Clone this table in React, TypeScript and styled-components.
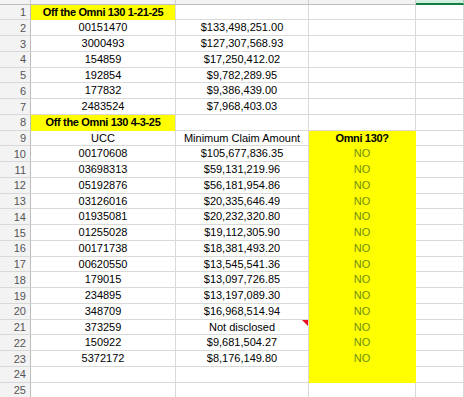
import React from "react";
import styled, { createGlobalStyle } from "styled-components";

const Global = createGlobalStyle`
  html, body { margin: 0; padding: 0; background: #ffffff; overflow: hidden; }
  body { font-family: "Liberation Sans", Arial, sans-serif; }
`;

const YELLOW = "#ffff00";
const GRID = "#d9d9d9";

const Sheet = styled.div`
  display: grid;
  grid-template-columns: 31px 145px 133px 107px 1fr;
  grid-template-rows: 20px repeat(25, 15.75px);
  margin-top: -15.3px;
  width: 464px;
  font-size: 11px;
  color: #000;
`;

const ColHead = styled.div<{ $active?: boolean }>`
  display: flex;
  align-items: center;
  justify-content: center;
  background: ${(p) => (p.$active ? "#d2eedc" : "#f3f3f3")};
  border-right: 1px solid ${(p) => (p.$active ? "#9fd3b3" : "#cfcfcf")};
  border-bottom: ${(p) => (p.$active ? "2px solid #107c41" : "1px solid #bdbdbd")};
  box-sizing: border-box;
  color: ${(p) => (p.$active ? "#0e5c30" : "#555")};
  font-size: 11px;
  line-height: 1;
  padding-top: 3px;
`;

const RowHead = styled.div`
  display: flex;
  align-items: center;
  justify-content: flex-end;
  padding-right: 4px;
  background: #f3f3f3;
  border-right: 1px solid #bdbdbd;
  border-bottom: 1px solid #d8d8d8;
  box-sizing: border-box;
  color: #555;
  font-size: 11px;
`;

const Cell = styled.div<{ $fill?: string; $bold?: boolean; $color?: string; $coverRight?: boolean }>`
  position: relative;
  display: flex;
  align-items: center;
  justify-content: center;
  white-space: nowrap;
  box-sizing: border-box;
  background: ${(p) => p.$fill || "transparent"};
  border-right: 1px solid ${(p) => (p.$fill && p.$coverRight ? p.$fill : GRID)};
  border-bottom: 1px solid ${(p) => p.$fill || GRID};
  font-weight: ${(p) => (p.$bold ? 700 : 400)};
  letter-spacing: ${(p) => (p.$bold ? "-0.35px" : "0")};
  color: ${(p) => p.$color || "#000"};
  padding-bottom: 1px;
`;

const CommentMark = styled.span`
  position: absolute;
  top: 0;
  right: 0;
  width: 0;
  height: 0;
  border-top: 6px solid #e81123;
  border-left: 6px solid transparent;
`;

type Row = { b?: string; c?: string; d?: string; bFill?: boolean; bBold?: boolean; dFill?: boolean; dBold?: boolean; comment?: boolean };

const rows: Row[] = [
  { b: "Off the Omni 130 1-21-25", bFill: true, bBold: true },
  { b: "00151470", c: "$133,498,251.00" },
  { b: "3000493", c: "$127,307,568.93" },
  { b: "154859", c: "$17,250,412.02" },
  { b: "192854", c: "$9,782,289.95" },
  { b: "177832", c: "$9,386,439.00" },
  { b: "2483524", c: "$7,968,403.03" },
  { b: "Off the Omni 130 4-3-25", bFill: true, bBold: true },
  { b: "UCC", c: "Minimum Claim Amount", d: "Omni 130?", dFill: true, dBold: true },
  { b: "00170608", c: "$105,677,836.35", d: "NO", dFill: true },
  { b: "03698313", c: "$59,131,219.96", d: "NO", dFill: true },
  { b: "05192876", c: "$56,181,954.86", d: "NO", dFill: true },
  { b: "03126016", c: "$20,335,646.49", d: "NO", dFill: true },
  { b: "01935081", c: "$20,232,320.80", d: "NO", dFill: true },
  { b: "01255028", c: "$19,112,305.90", d: "NO", dFill: true },
  { b: "00171738", c: "$18,381,493.20", d: "NO", dFill: true },
  { b: "00620550", c: "$13,545,541.36", d: "NO", dFill: true },
  { b: "179015", c: "$13,097,726.85", d: "NO", dFill: true },
  { b: "234895", c: "$13,197,089.30", d: "NO", dFill: true },
  { b: "348709", c: "$16,968,514.94", d: "NO", dFill: true },
  { b: "373259", c: "Not disclosed", d: "NO", dFill: true, comment: true },
  { b: "150922", c: "$9,681,504.27", d: "NO", dFill: true },
  { b: "5372172", c: "$8,176,149.80", d: "NO", dFill: true },
  { dFill: true },
  {},
];

export default function App() {
  return (
    <>
      <Global />
      <Sheet>
        <ColHead />
        <ColHead>A</ColHead>
        <ColHead>B</ColHead>
        <ColHead>C</ColHead>
        <ColHead $active>D</ColHead>
        {rows.map((r, i) => (
          <React.Fragment key={i}>
            <RowHead>{i + 1}</RowHead>
            <Cell $fill={r.bFill ? YELLOW : undefined} $bold={r.bBold}>
              {r.b}
            </Cell>
            <Cell>
              {r.c}
              {r.comment && <CommentMark />}
            </Cell>
            <Cell
              $fill={r.dFill ? YELLOW : undefined}
              $coverRight
              $bold={r.dBold}
              $color={r.d === "NO" ? "#6f8f14" : undefined}
            >
              {r.d}
            </Cell>
            <Cell />
          </React.Fragment>
        ))}
      </Sheet>
    </>
  );
}
